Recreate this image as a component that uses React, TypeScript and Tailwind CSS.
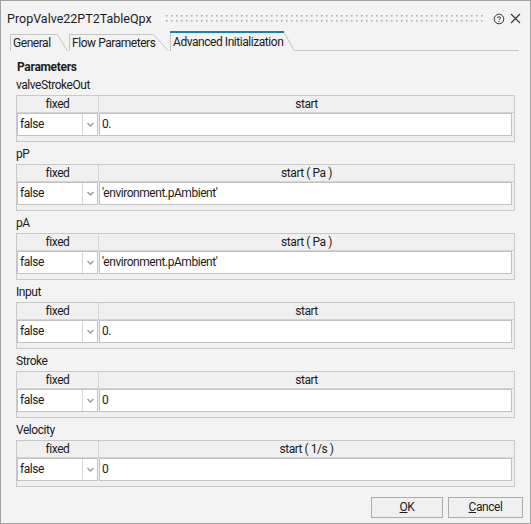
import React from "react";

type Group = { name: string; start: string; value: string };

const groups: Group[] = [
  { name: "valveStrokeOut", start: "start", value: "0." },
  { name: "pP", start: "start ( Pa )", value: "'environment.pAmbient'" },
  { name: "pA", start: "start ( Pa )", value: "'environment.pAmbient'" },
  { name: "Input", start: "start", value: "0." },
  { name: "Stroke", start: "start", value: "0" },
  { name: "Velocity", start: "start ( 1/s )", value: "0" },
];

function Tab({
  label,
  width,
  slant,
  active = false,
}: {
  label: string;
  width: number;
  slant: number;
  active?: boolean;
}) {
  const h = active ? 20 : 17;
  return (
    <div
      className={`relative shrink-0 ${active ? "h-[20px]" : "h-[17px]"}`}
      style={{ width }}
    >
      <svg className="absolute inset-0" width={width} height={h}>
        <polyline
          points={`0.5,${h} 0.5,0.5 ${width - slant - 0.5},0.5 ${width - 0.5},${h}`}
          fill="none"
          stroke="#c4c4c4"
          strokeWidth="1"
        />
        {active && <rect x="0" y="0" width={width - slant} height="2" fill="#1a7fb5" />}
      </svg>
      <span
        className={`absolute left-[3px] whitespace-nowrap leading-[16px] text-[12px] tracking-[-0.45px] text-[#1b1b1b] ${
          active ? "top-[3px]" : "top-[1px]"
        }`}
      >
        {label}
      </span>
    </div>
  );
}

function ParamTable({ start, value }: { start: string; value: string }) {
  return (
    <div className="border border-[#c9c9c9] bg-[#f0f0f0] pb-[5px]">
      {/* header */}
      <div className="flex h-[17px] border-b border-[#d4d4d4] text-[12px] leading-[17px] text-[#1b1b1b]">
        <div className="w-[82px] shrink-0 border-r border-[#d4d4d4] text-center">fixed</div>
        <div className="flex-1 text-center">{start}</div>
      </div>
      {/* values */}
      <div className="flex h-[23px] pr-[2px] text-[12px] text-[#1b1b1b]">
        <div className="flex w-[81px] shrink-0 border border-[#c2c2c2] bg-white">
          <span className="flex-1 pl-[2px] leading-[21px]">false</span>
          <div className="flex w-[15px] items-center justify-center border-l border-[#d6d6d6]">
            <svg width="7" height="5" viewBox="0 0 7 5">
              <polyline points="0.5,1 3.5,4 6.5,1" fill="none" stroke="#9a9a9a" strokeWidth="1.4" />
            </svg>
          </div>
        </div>
        <div className="ml-[1px] flex-1 border border-[#c2c2c2] bg-white pl-[2px] leading-[21px]">
          {value}
        </div>
      </div>
    </div>
  );
}

export default function App() {
  return (
    <div className="flex h-[524px] w-[531px] flex-col border border-[#a3a3a3] bg-[#f3f3f3] font-[Roboto,'Liberation_Sans',sans-serif] tracking-[-0.45px] text-[#1b1b1b]">
      {/* Title bar */}
      <div className="flex h-[30px] shrink-0 items-center pl-[6px] pr-[9px]">
        <span className="pt-[6px] text-[12.5px] leading-[16px] tracking-normal">PropValve22PT2TableQpx</span>
        <div className="ml-[14px] flex-1 pt-[5px]">
          <svg width="320" height="8" className="block">
            <defs>
              <pattern id="grip" width="5" height="5" patternUnits="userSpaceOnUse">
                <rect x="0" y="0" width="1.5" height="1.5" fill="#a6a6a6" />
              </pattern>
            </defs>
            <rect x="0" y="0" width="320" height="8" fill="url(#grip)" />
          </svg>
        </div>
        <svg width="12" height="12" viewBox="0 0 12 12" className="ml-[4px] mt-[5px]">
          <circle cx="6" cy="6" r="4.8" fill="none" stroke="#333" strokeWidth="1" />
          <path d="M4.3 4.9 C4.3 3.4 7.7 3.4 7.7 4.9 C7.7 6 6 6 6 7.2" fill="none" stroke="#333" strokeWidth="1" />
          <rect x="5.5" y="8" width="1" height="1" fill="#333" />
        </svg>
        <svg width="11" height="11" viewBox="0 0 11 11" className="ml-[5px] mt-[5px]">
          <path d="M1 1 L10 10 M10 1 L1 10" stroke="#333" strokeWidth="1.1" />
        </svg>
      </div>

      {/* Tabs */}
      <div className="flex h-[20px] shrink-0 items-end pl-[9px] pr-[11px]">
        <Tab label="General" width={58} slant={10} />
        <div className="w-[1px]" />
        <Tab label="Flow Parameters" width={100} slant={15} />
        <div className="w-[1px]" />
        <Tab label="Advanced Initialization" width={125} slant={11} active />
        <div className="h-[1px] flex-1 bg-[#c4c4c4]" />
      </div>

      {/* Content */}
      <div className="flex flex-1 flex-col px-[15px]">
        <div className="mt-[8px] pl-[1px] text-[12px] font-bold leading-[16px] tracking-[-0.3px]">Parameters</div>
        <div className="mt-[2px] flex flex-col gap-[4px]">
          {groups.map((g) => (
            <div key={g.name} className="flex flex-col gap-[2px]">
              <div className="text-[12px] leading-[16px]">{g.name}</div>
              <ParamTable start={g.start} value={g.value} />
            </div>
          ))}
        </div>
      </div>

      {/* Buttons */}
      <div className="mb-[5px] flex shrink-0 justify-end gap-[5px] pr-[7px]">
        <button className="h-[21px] w-[72px] border border-[#adadad] bg-[#f0f0f0] text-[12px] leading-[19px]">
          <span className="underline">O</span>K
        </button>
        <button className="h-[21px] w-[75px] border border-[#adadad] bg-[#f0f0f0] text-[12px] leading-[19px]">
          <span className="underline">C</span>ancel
        </button>
      </div>
    </div>
  );
}
